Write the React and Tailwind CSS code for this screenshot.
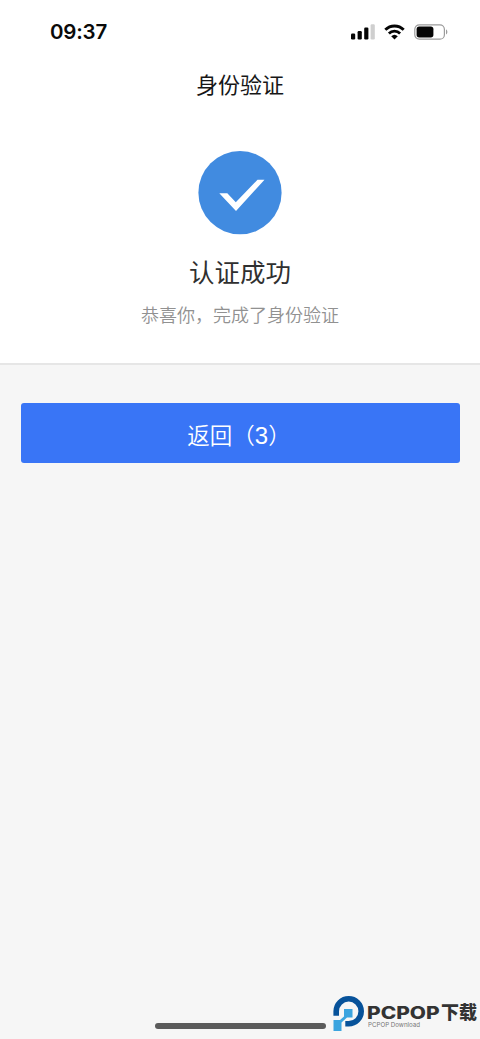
function SignalIcon() {
  return (
    <svg width="24" height="16" viewBox="0 0 24 16">
      <rect x="0" y="9.5" width="4.2" height="6" rx="1.2" fill="#050505" />
      <rect x="6.6" y="7" width="4.2" height="8.5" rx="1.2" fill="#050505" />
      <rect x="13.2" y="3.5" width="4.2" height="12" rx="1.2" fill="#050505" />
      <rect x="19.6" y="0.3" width="4.2" height="15.2" rx="1.2" fill="#cfcfcf" />
    </svg>
  );
}

function WifiIcon() {
  return (
    <svg width="21" height="16" viewBox="0 0 21 16" fill="none" stroke="#050505" strokeWidth="2.8">
      <path d="M1.3 5.8a13 13 0 0 1 18.4 0" />
      <path d="M4.9 9.5a8 8 0 0 1 11.2 0" />
      <path d="M10.5 15.6l-3.3-3.4a4.8 4.8 0 0 1 6.6 0z" fill="#050505" stroke="none" />
    </svg>
  );
}

function BatteryIcon() {
  return (
    <svg width="34" height="16" viewBox="0 0 34 16">
      <rect x="0.8" y="0.8" width="29.6" height="14.4" rx="4.5" fill="none" stroke="#9b9b9b" strokeWidth="1.2" />
      <rect x="2.6" y="2.6" width="16.8" height="10.8" rx="2.6" fill="#050505" />
      <path d="M32 5.6c1.8.6 1.8 4.2 0 4.8z" fill="#9b9b9b" />
    </svg>
  );
}

function StatusBar() {
  return (
    <div className="flex h-16 items-center justify-between pl-[50px] pr-8">
      <span className="pt-px font-['Inter','Liberation_Sans',sans-serif] text-[20.5px] font-semibold leading-none tracking-[-0.2px] text-[#0a0a0a]">09:37</span>
      <div className="flex items-center">
        <SignalIcon />
        <div className="ml-[9px]"><WifiIcon /></div>
        <div className="ml-[9px]"><BatteryIcon /></div>
      </div>
    </div>
  );
}

function Watermark() {
  return (
    <div className="absolute left-[333px] top-[995px] flex">
      <svg width="32" height="37" viewBox="0 0 32 37">
        <path d="M3.2 20.8V16.3A12.5 12.5 0 1 1 15.7 28.8H12.3" fill="none" stroke="#07529a" strokeWidth="5.6" />
        <path d="M11 14h8.5v8.5h-5.5l-5.500 5V36H.5V25h6.500l4-3.500z" fill="#3ba4df" />
      </svg>
      <div className="relative ml-[2px] h-9 w-[112px] whitespace-nowrap font-['Inter','Noto_Sans_CJK_SC',sans-serif] text-[#333]">
        <span className="absolute left-0 top-[10px] origin-left scale-x-[1.23] text-[17px] font-extrabold leading-[17px]">PCPOP</span>
        <span className="absolute left-[74px] top-[9px] text-[18px] font-black leading-[18px]">下载</span>
        <span className="absolute left-[1px] top-[26px] origin-left scale-x-[1.03] text-[6px] leading-[7px] text-[#777]">PCPOP Download</span>
      </div>
    </div>
  );
}

export default function App() {
  return (
    <div className="relative flex h-[1039px] w-[480px] flex-col overflow-hidden bg-[#f6f6f6] font-['Noto_Sans_CJK_SC',sans-serif]">
      {/* Result panel */}
      <section className="h-[365px] border-b-2 border-[#e6e6e6] bg-white text-center">
        <StatusBar />
        <h1 className="mt-[3px] text-[22px] leading-8 text-[#171717]">身份验证</h1>
        <svg className="mx-auto mt-[52px]" width="84" height="84" viewBox="0 0 84 84">
          <circle cx="42" cy="41.7" r="41.6" fill="#418be0" />
          <path d="M21.3 42.3h8l8.5 9L59.5 28.8H66.5L38 60z" fill="#fff" />
        </svg>
        <h2 className="mt-[18px] text-[25.5px] leading-[36px] text-[#303030]">认证成功</h2>
        <p className="mt-[11px] text-[18px] font-[350] leading-7 text-[#919191]">恭喜你，完成了身份验证</p>
      </section>

      <div className="px-[20.5px] pt-[38px]">
        <button className="h-[60px] w-full rounded-[3px] bg-[#3975f6] pr-[2px] pt-[3px] text-[22.5px] font-[350] leading-8 text-white">
          返回（<span className="font-['Liberation_Sans',sans-serif] text-[24px]">3</span>）
        </button>
      </div>

      {/* Home indicator */}
      <div className="mx-auto mb-[10px] mt-auto h-[6px] w-[171px] rounded-full bg-[#5b5b5b]" />

      <Watermark />
    </div>
  );
}
